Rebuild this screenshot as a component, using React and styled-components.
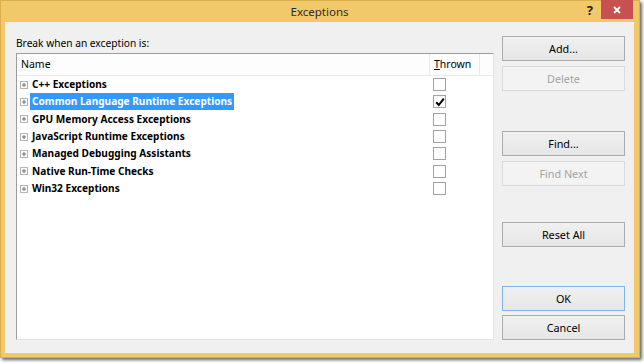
import React from "react"
import styled, { createGlobalStyle } from "styled-components"

const GlobalStyle = createGlobalStyle`
  html, body {
    margin: 0;
    padding: 0;
    background: #ffffff;
  }
  body {
    font-family: "Noto Sans", "Open Sans", sans-serif;
    color: #000;
  }
`

const Stage = styled.div`
  width: 644px;
  height: 363px;
  overflow: hidden;
  background: #ffffff;
`

const Frame = styled.div`
  width: 640px;
  height: 358px;
  box-sizing: border-box;
  background: #f1c86a;
  border: 1px solid #dcae4c;
  box-shadow: 2px 2px 3px rgba(0, 0, 0, 0.6);
  display: flex;
  flex-direction: column;
  padding: 0 5px 5px 4px;
`

const TitleBar = styled.div`
  height: 21px;
  display: grid;
  grid-template-columns: 1fr auto 1fr;
  align-items: start;
`

const Title = styled.div`
  grid-column: 2;
  font-size: 11.5px;
  line-height: 21px;
  color: #2e2e2e;
`

const Controls = styled.div`
  grid-column: 3;
  display: flex;
  justify-content: flex-end;
  align-items: flex-start;
  margin-top: -1px;
`

const Help = styled.span`
  font-size: 13px;
  font-weight: 700;
  line-height: 20px;
  color: #222;
  margin-right: 8px;
`

const Close = styled.div`
  width: 32px;
  height: 19px;
  background: #c75050;
  display: flex;
  align-items: center;
  justify-content: center;
  margin-right: 1px;
`

const Client = styled.div`
  flex: 1;
  background: #f0f0f0;
  display: flex;
  gap: 8px;
  padding: 14px 9px 13px 11px;
`

const LeftCol = styled.div`
  flex: 1;
  display: flex;
  flex-direction: column;
`

const Label = styled.div`
  font-size: 10.2px;
  line-height: 15px;
  margin-bottom: 2px;
`

const List = styled.div`
  flex: 1;
  background: #ffffff;
  border-top: 1px solid #9c9c9c;
  border-left: 1px solid #9c9c9c;
  border-right: 1px solid #e3e3e3;
  border-bottom: 1px solid #e3e3e3;
`

const Header = styled.div`
  height: 21px;
  display: flex;
  background: #fdfdfd;
  border-bottom: 1px solid #ebebeb;
  font-size: 10.5px;
`

const HeadCell = styled.div`
  width: ${(p) => p.$w}px;
  box-sizing: border-box;
  padding-left: ${(p) => p.$pad}px;
  line-height: 21px;
  border-right: 1px solid #ebebeb;
`

const Row = styled.div`
  height: 17.33px;
  display: flex;
  align-items: center;
`

const NameCell = styled.div`
  width: 413px;
  display: flex;
  align-items: center;
  padding-left: 3px;
  box-sizing: border-box;
`

const Name = styled.span`
  margin-left: 2px;
  padding: 0 2px;
  font-size: 10.1px;
  font-weight: 700;
  line-height: 17px;
  background: ${(p) => (p.$selected ? "#3399ff" : "transparent")};
  color: ${(p) => (p.$selected ? "#ffffff" : "#000000")};
`

const CheckCell = styled.div`
  width: 50px;
  padding-left: 3px;
  display: flex;
  align-items: center;
`

const Box = styled.div`
  width: 11px;
  height: 11px;
  border: 1px solid #a2a2a2;
  background: #fff;
  display: flex;
  align-items: center;
  justify-content: center;
`

const RightCol = styled.div`
  width: 123px;
  display: flex;
  flex-direction: column;
`

const Button = styled.div`
  height: 25px;
  box-sizing: border-box;
  margin-top: ${(p) => p.$gap || 0}px;
  display: flex;
  align-items: center;
  justify-content: center;
  font-size: 10.8px;
  border: 1px solid
    ${(p) => (p.$default ? "#7eb4ea" : p.$disabled ? "#dadada" : "#acacac")};
  background: ${(p) =>
    p.$disabled ? "#f3f3f3" : "linear-gradient(#f0f0f0, #e6e6e6)"};
  color: ${(p) => (p.$disabled ? "#a3a3a3" : "#000")};
`

const Expander = () => (
  <svg width="8" height="8" viewBox="0 0 8 8">
    <rect x="0.5" y="0.5" width="7" height="7" fill="#fff" stroke="#b4b4b4" />
    <path d="M2 4h4M4 2v4" stroke="#6a6a6a" strokeWidth="1" />
  </svg>
)

const Check = () => (
  <svg width="10" height="10" viewBox="0 0 10 10">
    <path d="M1.2 5.2 L3.8 8 L8.8 1.6" fill="none" stroke="#000" strokeWidth="2" />
  </svg>
)

const rows = [
  { name: "C++ Exceptions" },
  { name: "Common Language Runtime Exceptions", selected: true, checked: true },
  { name: "GPU Memory Access Exceptions" },
  { name: "JavaScript Runtime Exceptions" },
  { name: "Managed Debugging Assistants" },
  { name: "Native Run-Time Checks" },
  { name: "Win32 Exceptions" },
]

const buttons = [
  { label: "Add...", gap: 0 },
  { label: "Delete", gap: 5, disabled: true },
  { label: "Find...", gap: 40 },
  { label: "Find Next", gap: 5, disabled: true },
  { label: "Reset All", gap: 36 },
  { label: "OK", gap: 39, isDefault: true },
  { label: "Cancel", gap: 4 },
]

export default function App() {
  return (
    <Stage>
      <GlobalStyle />
      <Frame>
        <TitleBar>
          <Title>Exceptions</Title>
          <Controls>
            <Help>?</Help>
            <Close>
              <svg width="8" height="8" viewBox="0 0 8 8">
                <path d="M1 1L7 7M7 1L1 7" stroke="#fff" strokeWidth="1.8" />
              </svg>
            </Close>
          </Controls>
        </TitleBar>
        <Client>
          <LeftCol>
            <Label>Break when an exception is:</Label>
            <List>
              <Header>
                <HeadCell $w={413} $pad={4}>Name</HeadCell>
                <HeadCell $w={50} $pad={4}>
                  <u>T</u>hrown
                </HeadCell>
              </Header>
              {rows.map((r) => (
                <Row key={r.name}>
                  <NameCell>
                    <Expander />
                    <Name $selected={r.selected}>{r.name}</Name>
                  </NameCell>
                  <CheckCell>
                    <Box>{r.checked && <Check />}</Box>
                  </CheckCell>
                </Row>
              ))}
            </List>
          </LeftCol>
          <RightCol>
            {buttons.map((b) => (
              <Button
                key={b.label}
                $gap={b.gap}
                $disabled={b.disabled}
                $default={b.isDefault}
              >
                {b.label}
              </Button>
            ))}
          </RightCol>
        </Client>
      </Frame>
    </Stage>
  )
}
